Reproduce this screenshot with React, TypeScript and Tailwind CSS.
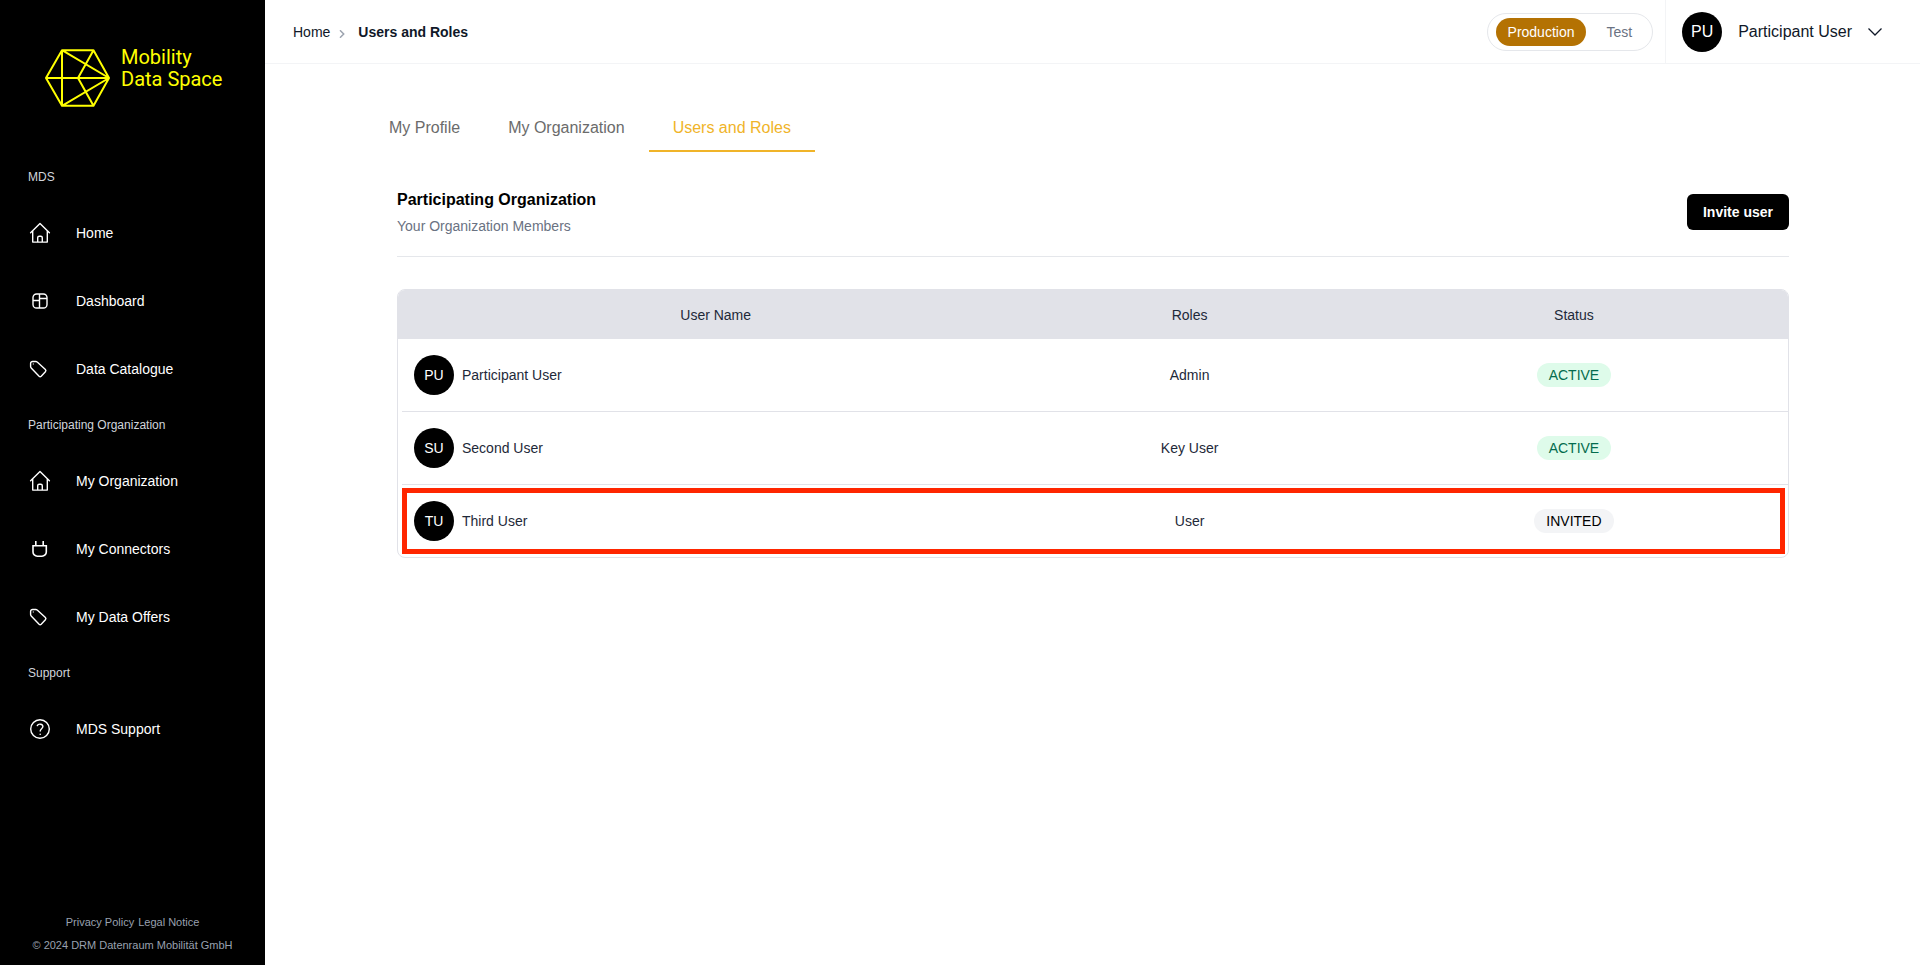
import { ReactNode } from "react";

const HomeIcon = () => (
  <svg className="size-6" viewBox="0 0 24 24" fill="none" stroke="currentColor" strokeWidth="1.4" strokeLinecap="round" strokeLinejoin="round" aria-hidden="true">
    <path d="M2.600 11.800 12 2.600l9.400 9.200M4.700 10v11.100h14.600V10M9.700 21v-4.200q0-1.500 1.500-1.500h1.600q1.500 0 1.500 1.500V21" />
  </svg>
);

const DashboardIcon = () => (
  <svg className="size-6" viewBox="0 0 24 24" fill="none" stroke="currentColor" strokeWidth="1.4" aria-hidden="true">
    <rect x="5" y="5" width="14" height="14" rx="3.600" />
    <path d="M11.500 5v14M11.500 9.500H19M5 11.500h6.500" />
  </svg>
);

const TagIcon = () => (
  <svg className="size-6" viewBox="0 0 24 24" fill="none" stroke="currentColor" strokeWidth="1.4" strokeLinejoin="round" aria-hidden="true">
    <path d="M2.600 6.500a2 2 0 0 1 2-2h3.200a2 2 0 0 1 1.400.6l8.200 7.500a1.500 1.500 0 0 1 0 2.100l-4.200 4.500a1.500 1.500 0 0 1-2.100 0L3.200 11a2 2 0 0 1-.6-1.400z" />
    <circle cx="5.200" cy="7" r=".3" strokeWidth=".8" />
  </svg>
);

const PlugIcon = () => (
  <svg className="size-6" viewBox="0 0 24 24" fill="none" stroke="currentColor" strokeWidth="1.6" aria-hidden="true">
    <path d="M7.800 4v4.700M15.200 4v4.700M5 8.700h13.300v6.200a4.300 4.300 0 0 1-4.300 4.300H9.300A4.300 4.300 0 0 1 5 14.900z" />
  </svg>
);

const HelpIcon = () => (
  <svg className="size-6" viewBox="0 0 24 24" fill="none" stroke="currentColor" strokeWidth="1.4" strokeLinecap="round" aria-hidden="true">
    <circle cx="12" cy="12" r="9.300" />
    <path d="M9.300 8.600c1.100-2.200 5.600-1.800 5.600 1 0 2.100-2.700 2.200-2.700 4.400M12.200 17.200v.2" />
  </svg>
);

type Item = { label: string; icon: ReactNode };
const sections: { title: string; items: Item[] }[] = [
  {
    title: "MDS",
    items: [
      { label: "Home", icon: <HomeIcon /> },
      { label: "Dashboard", icon: <DashboardIcon /> },
      { label: "Data Catalogue", icon: <TagIcon /> },
    ],
  },
  {
    title: "Participating Organization",
    items: [
      { label: "My Organization", icon: <HomeIcon /> },
      { label: "My Connectors", icon: <PlugIcon /> },
      { label: "My Data Offers", icon: <TagIcon /> },
    ],
  },
  { title: "Support", items: [{ label: "MDS Support", icon: <HelpIcon /> }] },
];

const users = [
  { initials: "PU", name: "Participant User", role: "Admin", status: "ACTIVE" },
  { initials: "SU", name: "Second User", role: "Key User", status: "ACTIVE" },
  { initials: "TU", name: "Third User", role: "User", status: "INVITED" },
];

function Sidebar() {
  return (
    <aside className="flex w-[265px] shrink-0 flex-col bg-black text-white">
      <a href="#" className="flex items-start gap-[10px] pt-[46px] pl-11 text-[#ffff00]">
        <svg className="mt-0.5 h-[60px] w-[67px]" viewBox="0 0 67 60" fill="none" stroke="currentColor" strokeWidth="2" strokeLinejoin="round" aria-hidden="true">
          <path d="M2 30 18 2.200h31.500L65 30 49.500 57.800H18zM18 2.200v55.600M2 30h63M18 2.200 65 30 18 57.800M49.500 2.200 34 30l15.500 27.800" />
        </svg>
        <span className="font-[Roboto,sans-serif] text-[20px] leading-[22px]">
          Mobility
          <br />
          Data Space
        </span>
      </a>
      <nav className="mt-[57px]">
        {sections.map((s) => (
          <div key={s.title}>
            <h2 className="px-7 py-1 text-xs leading-4 font-normal text-gray-300">{s.title}</h2>
            <ul className="py-2.5">
              {s.items.map((i) => (
                <li key={i.label}>
                  <a href="#" className="flex h-[68px] items-center gap-6 px-7 text-sm font-medium">
                    {i.icon}
                    {i.label}
                  </a>
                </li>
              ))}
            </ul>
          </div>
        ))}
      </nav>
      <footer className="mt-auto pb-3 text-center text-[11px] leading-4 text-gray-400">
        <p className="mb-[7px] flex justify-center gap-1">
          <a href="#">Privacy Policy</a>
          <a href="#">Legal Notice</a>
        </p>
        <p>© 2024 DRM Datenraum Mobilität GmbH</p>
      </footer>
    </aside>
  );
}

function Header() {
  return (
    <header className="flex h-16 border-b border-gray-100">
      <nav aria-label="Breadcrumb" className="flex flex-1 items-center gap-2 pl-7 text-sm text-gray-900">
        <a href="#">Home</a>
        <svg className="mt-1 mr-1 size-2" viewBox="0 0 8 8" fill="none" stroke="#9ca3af" strokeWidth="1.5" aria-hidden="true">
          <path d="M2 .3 5.700 4 2 7.700" />
        </svg>
        <span className="font-bold">Users and Roles</span>
      </nav>
      <div className="mr-3 flex items-center">
        <div className="flex h-[38px] items-center rounded-full border border-gray-200 px-2 text-sm">
          <button className="h-7 rounded-full bg-[#b47203] px-3 text-white">Production</button>
          <button className="h-7 pr-3 pl-5 text-gray-500">Test</button>
        </div>
      </div>
      <button className="flex items-center gap-4 border-l border-gray-100 pr-[38px] pl-4 text-base text-gray-900">
        <span className="flex size-10 items-center justify-center rounded-full bg-black text-white">PU</span>
        <span>Participant User</span>
        <svg className="h-4 w-3.5" viewBox="0 0 14 16" fill="none" stroke="currentColor" strokeWidth="1.25" aria-hidden="true">
          <path d="m.5 4.500 6.500 6.500 6.500-6.500" />
        </svg>
      </button>
    </header>
  );
}

const tabs = ["My Profile", "My Organization", "Users and Roles"];

export default function App() {
  return (
    <div className="flex min-h-screen bg-white font-['Liberation_Sans',Arial,sans-serif]">
      <Sidebar />
      <div className="min-w-0 flex-1">
        <Header />
        <main className="pt-10 pr-[131px] pl-[132px]">
          <nav className="-ml-8 flex text-base text-[#6b6b6b]">
            {tabs.map((t) => (
              <a
                key={t}
                href="#"
                className={
                  t === "Users and Roles"
                    ? "border-b-2 border-[#f0b429] px-6 pt-3 pb-2.5 text-[#f0b429]"
                    : "border-b-2 border-transparent px-6 pt-3 pb-2.5"
                }
              >
                {t}
              </a>
            ))}
          </nav>
          <section className="mt-9 flex items-center justify-between border-b border-gray-200 pb-5">
            <div>
              <h1 className="text-base leading-6 font-bold text-black">Participating Organization</h1>
              <p className="mt-1 text-sm text-gray-500">Your Organization Members</p>
            </div>
            <button className="h-9 rounded-md bg-black px-4 text-sm font-bold text-white">Invite user</button>
          </section>
          <div className="relative mt-8 overflow-hidden rounded-lg border border-[#e1e2e8]">
            <table className="w-full table-fixed border-separate border-spacing-0 text-sm text-gray-800">
              <thead className="bg-[#e1e2e8]">
                <tr className="h-[49px]">
                  <th className="w-[44.7%] pl-3.5 font-normal">User Name</th>
                  <th className="w-[24.5%] font-normal">Roles</th>
                  <th className="w-[30.8%] font-normal">Status</th>
                </tr>
              </thead>
              <tbody>
                {users.map((u) => (
                  <tr key={u.name} className="group">
                    <td className="p-0">
                      <div className="ml-1 flex h-[73px] items-center gap-2 border-b border-[#e1e2e8] pl-3 group-last:h-[72px] group-last:border-b-0">
                        <span className="flex size-10 items-center justify-center rounded-full bg-black text-white">{u.initials}</span>
                        {u.name}
                      </div>
                    </td>
                    <td className="border-b border-[#e1e2e8] text-center group-last:border-b-0">{u.role}</td>
                    <td className="border-b border-[#e1e2e8] text-center group-last:border-b-0">
                      <span
                        className={
                          u.status === "ACTIVE"
                            ? "inline-block rounded-full bg-[#defbea] px-3 py-0.5 text-[#046c4e]"
                            : "inline-block rounded-full bg-gray-100 px-3 py-0.5 text-black"
                        }
                      >
                        {u.status}
                      </span>
                    </td>
                  </tr>
                ))}
              </tbody>
            </table>
            <div className="pointer-events-none absolute right-[3px] bottom-[3px] left-1 h-[66px] border-5 border-[#ff2600]" />
          </div>
        </main>
      </div>
    </div>
  );
}
